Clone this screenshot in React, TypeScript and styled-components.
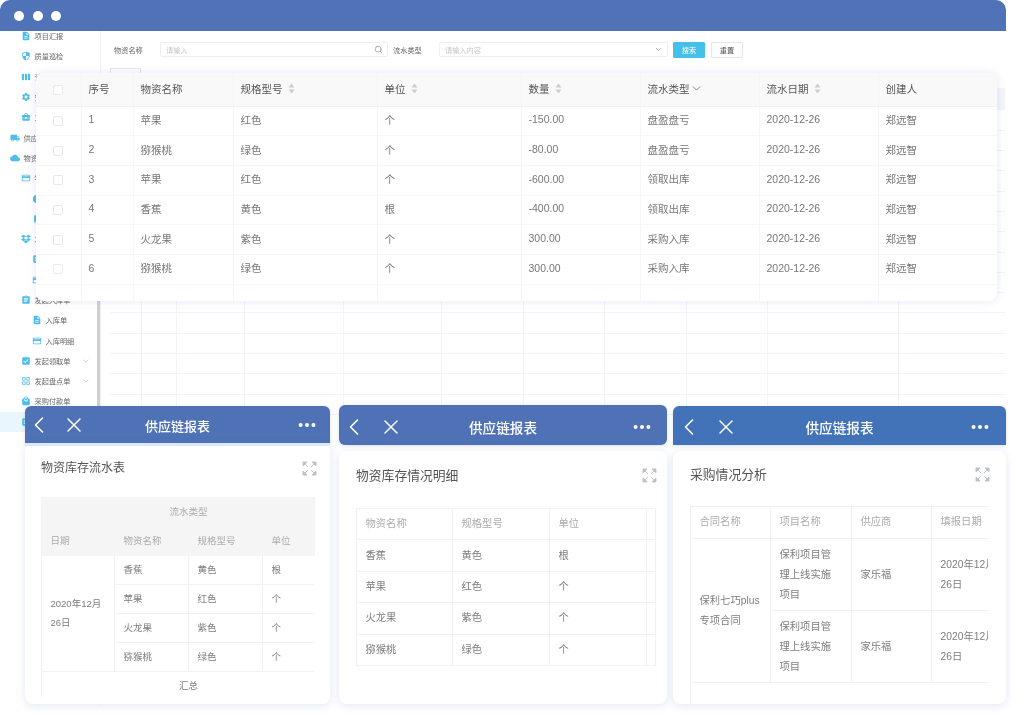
import React from 'react';
import styled, { createGlobalStyle } from 'styled-components';
import { ChevronDown, ChevronLeft, Ellipsis, Search, X } from 'lucide-react';
import { FaDropbox } from 'react-icons/fa';
import {
	MdAssignment,
	MdAssignmentTurnedIn,
	MdBookmark,
	MdBusinessCenter,
	MdCloud,
	MdCreditCard,
	MdDescription,
	MdGridView,
	MdLocalMall,
	MdLocalShipping,
	MdPieChart,
	MdSecurity,
	MdSettings,
	MdViewWeek,
} from 'react-icons/md';

const FONT = '"Liberation Sans", "Noto Sans CJK SC", sans-serif';

const GlobalStyle = createGlobalStyle`
	html, body {
		margin: 0;
		padding: 0;
		background: #fff;
		font-family: ${FONT};
	}
	* { box-sizing: border-box; }
`;

const Page = styled.div`
	position: relative;
	width: 1022px;
	height: 720px;
	overflow: hidden;
	background: #fff;
	filter: blur(0.45px);
`;

/* ---------- back window ---------- */

const Window = styled.div`
	display: flex;
	flex-direction: column;
	width: 1006px;
	height: 705px;
	border-radius: 10px 10px 0 0;
	overflow: hidden;
	background: #fff;
`;

const TitleBar = styled.div`
	display: flex;
	flex: none;
	align-items: center;
	gap: 8.5px;
	height: 31px;
	padding-left: 14px;
	background: #4f73b6;
`;

const Dot = styled.span`
	width: 10px;
	height: 10px;
	border-radius: 50%;
	background: #fff;
`;

const WindowBody = styled.div`
	display: flex;
	flex: 1;
	min-height: 0;
`;

const Sidebar = styled.div`
	position: relative;
	flex: none;
	width: 101px;
	overflow: hidden;
	border-right: 1px solid #f1f3f8;
`;

const SideList = styled.div`
	margin-top: -5px;
`;

const ScrollThumb = styled.div`
	position: absolute;
	top: 130px;
	right: 0;
	width: 3px;
	height: 255px;
	background: #cfcfcf;
`;

const SideRow = styled.div<{ $level: number; $active?: boolean }>`
	display: flex;
	align-items: center;
	gap: 3.5px;
	height: 20.3px;
	padding-left: ${({ $level }) => 10 + ($level - 1) * 11}px;
	font-size: 7.2px;
	color: #666;
	white-space: nowrap;
	background: ${({ $active }) => ($active ? '#e9f6fd' : 'transparent')};

	svg.side-icon {
		flex: none;
		color: #4fbde9;
	}
`;

const SideCaret = styled(ChevronDown)`
	position: absolute;
	right: 10px;
	color: #b9b9b9;
`;

const Main = styled.div`
	display: flex;
	flex: 1;
	flex-direction: column;
	min-width: 0;
	padding: 11px 0 0 9px;
`;

const FilterRow = styled.div`
	display: flex;
	align-items: center;
	height: 15px;
	padding-left: 4px;
	font-size: 7.2px;
	color: #666;
`;

const FilterLabel = styled.span`
	flex: none;
	width: 46px;
`;

const FilterInput = styled.div<{ $width: number }>`
	display: flex;
	flex: none;
	align-items: center;
	justify-content: space-between;
	width: ${({ $width }) => $width}px;
	height: 15px;
	margin-right: 5px;
	padding: 0 4px 0 5px;
	border: 1px solid #efefef;
	border-radius: 2px;
	color: #c6c6c6;

	svg {
		color: #999;
	}
`;

const FilterButton = styled.div<{ $primary?: boolean }>`
	display: flex;
	flex: none;
	align-items: center;
	justify-content: center;
	width: 32px;
	height: 16px;
	margin-right: 6px;
	border: 1px solid ${({ $primary }) => ($primary ? '#45c0e8' : '#e6e6e6')};
	border-radius: 1px;
	background: ${({ $primary }) => ($primary ? '#45c0e8' : '#fff')};
	color: ${({ $primary }) => ($primary ? '#fff' : '#555')};
`;

const TabButton = styled.div`
	display: flex;
	flex: none;
	align-items: center;
	justify-content: center;
	width: 31px;
	height: 20px;
	margin-top: 11px;
	border: 1px solid #e6e6e6;
	font-size: 7.2px;
	color: #555;
`;

const BackGrid = styled.table`
	flex: none;
	width: 895px;
	border-collapse: collapse;
	table-layout: fixed;

	th {
		height: 22px;
		padding: 0;
		background: #f3f5fb;
	}

	td {
		height: 20.3px;
		padding: 0;
		border: 1px solid #f2f3f9;
		border-top: 0;
	}
	td:first-child { border-left: 0; }
	td:last-child { border-right: 0; }
`;

/* ---------- main table card ---------- */

const TableCard = styled.div`
	position: absolute;
	top: 73px;
	left: 36px;
	width: 961px;
	height: 228px;
	overflow: hidden;
	border-radius: 8px;
	background: #fff;
	box-shadow: 0 0 10px rgba(84, 112, 190, 0.16);
`;

const DataTable = styled.table`
	width: 961px;
	border-collapse: collapse;
	table-layout: fixed;
	font-size: 10.5px;
	color: #777;

	th {
		height: 33px;
		padding: 0 0 2px 7px;
		background: #f9f9f9;
		border-right: 1px solid #f5f5f7;
		border-bottom: 1px solid #f0f1f4;
		font-weight: 400;
		text-align: left;
		color: #555;
	}

	td {
		height: 29.7px;
		padding: 0 0 3px 7px;
		border-right: 1px solid #f5f6f9;
		border-bottom: 1px solid #f5f6f9;
	}

	tr:last-child td {
		height: 17px;
		border-bottom: 0;
	}

	th:last-child, td:last-child { border-right: 0; }
`;

const HeadCell = styled.span<{ $gap?: number }>`
	display: inline-flex;
	align-items: center;
	gap: ${({ $gap }) => $gap ?? 5}px;
`;

const CheckBox = styled.span`
	display: block;
	width: 10px;
	height: 10px;
	margin: 3px 0 0 10px;
	border: 1px solid #e8e8e8;
	border-radius: 2px;
	background: #fff;
`;

const SortMark = () => (
	<svg width="7" height="11" viewBox="0 0 7 11">
		<path d="M3.5 0.5 L6.5 4.5 L0.5 4.5 Z M3.5 10.5 L6.5 6.5 L0.5 6.5 Z" fill="#cdcdcd" />
	</svg>
);

/* ---------- phone cards ---------- */

const PhoneRow = styled.div`
	position: absolute;
	top: 406px;
	left: 25px;
	display: flex;
	align-items: flex-start;
`;

const Phone = styled.div<{ $width: number; $left?: number; $raise?: number }>`
	display: flex;
	flex: none;
	flex-direction: column;
	width: ${({ $width }) => $width}px;
	margin-left: ${({ $left }) => $left || 0}px;
	margin-top: ${({ $raise }) => -($raise || 0)}px;
`;

const PhoneHeader = styled.div<{ $height: number; $color: string; $top: number; $square?: boolean }>`
	display: grid;
	flex: none;
	grid-template-columns: 1fr auto 1fr;
	align-items: center;
	height: ${({ $height }) => $height}px;
	padding-top: ${({ $top }) => $top}px;
	border-radius: ${({ $square }) => ($square ? '6px 6px 0 0' : '6px')};
	background: ${({ $color }) => $color};
	box-shadow: 0 1px 4px rgba(70, 100, 170, 0.18);
	color: #fff;
`;

const HeaderLeft = styled.div<{ $pad: number; $gap: number }>`
	display: flex;
	align-items: center;
	gap: ${({ $gap }) => $gap}px;
	padding-left: ${({ $pad }) => $pad}px;
`;

const HeaderRight = styled.div<{ $pad: number }>`
	display: flex;
	justify-content: flex-end;
	padding-right: ${({ $pad }) => $pad}px;
`;

const HeaderTitle = styled.span<{ $size: number }>`
	font-size: ${({ $size }) => $size}px;
	font-weight: 500;
`;

const PhoneBody = styled.div<{ $height: number; $gap: number; $left: number; $right: number; $accent?: boolean }>`
	flex: none;
	height: ${({ $height }) => $height}px;
	margin-top: ${({ $gap }) => $gap}px;
	padding: 0 ${({ $right }) => $right}px 0 ${({ $left }) => $left}px;
	overflow: hidden;
	border-top: ${({ $accent }) => ($accent ? '3px solid #d9e9f9' : '0')};
	border-radius: ${({ $accent }) => ($accent ? '0 0 8px 8px' : '8px')};
	background: #fff;
	box-shadow: 0 2px 10px rgba(84, 112, 190, 0.16);
`;

const BodyHead = styled.div<{ $size: number; $height: number; $below: number }>`
	display: flex;
	align-items: center;
	justify-content: space-between;
	height: ${({ $height }) => $height}px;
	margin-bottom: ${({ $below }) => $below}px;
	font-size: ${({ $size }) => $size}px;
	color: #555;

	svg {
		margin: 3px -2px 0 0;
	}
`;

const ClipBox = styled.div<{ $height?: number }>`
	height: ${({ $height }) => ($height ? `${$height}px` : 'auto')};
	overflow: hidden;
`;

const ReportTable = styled.table<{ $width: number; $size: number; $rowHeight: number; $padY?: number }>`
	width: ${({ $width }) => $width}px;
	border-collapse: collapse;
	table-layout: fixed;
	font-size: ${({ $size }) => $size}px;
	line-height: 1.95;
	color: #7d7d7d;

	th, td {
		height: ${({ $rowHeight }) => $rowHeight}px;
		padding: 0 0 0 8.5px;
		border: 1px solid #f0f1f4;
		font-weight: 400;
		text-align: left;
		white-space: nowrap;
		overflow: hidden;
	}

	td {
		padding-top: ${({ $padY }) => $padY || 0}px;
		padding-bottom: ${({ $padY }) => $padY || 0}px;
	}

	th {
		color: #acacac;
	}
`;

const ShadedRow = styled.tr`
	th {
		background: #f5f5f5;
		border-color: #f5f5f5;
	}
`;

const CenterCell = styled.td`
	&& {
		padding-left: 20px;
		text-align: center;
	}
`;

const CenterHead = styled.th`
	&& {
		padding-left: 0;
		text-align: center;
	}
`;

const ExpandMark = () => (
	<svg width="15" height="15" viewBox="0 0 15 15" fill="#bcc1c7" stroke="#bcc1c7" strokeWidth="0.9">
		<path d="M1 1H5L1 5Z M2 2L6 6" />
		<path d="M14 1H10L14 5Z M13 2L9 6" />
		<path d="M1 14H5L1 10Z M2 13L6 9" />
		<path d="M14 14H10L14 10Z M13 13L9 9" />
	</svg>
);

const sideItems: { label: string; level: number; icon: React.ElementType; caret?: boolean; active?: boolean }[] = [
	{ label: '项目汇报', level: 2, icon: MdDescription },
	{ label: '质量巡检', level: 2, icon: MdSecurity },
	{ label: '计划管理', level: 2, icon: MdViewWeek },
	{ label: '安全管理', level: 2, icon: MdSettings },
	{ label: '工程管理', level: 2, icon: MdBusinessCenter },
	{ label: '供应链管理', level: 1, icon: MdLocalShipping },
	{ label: '物资管理', level: 1, icon: MdCloud },
	{ label: '物资档案', level: 2, icon: MdCreditCard },
	{ label: '物资信息', level: 3, icon: MdPieChart },
	{ label: '供应商库', level: 3, icon: MdBookmark },
	{ label: '发起采购', level: 2, icon: FaDropbox },
	{ label: '采购订单', level: 3, icon: MdAssignment },
	{ label: '采购明细', level: 3, icon: MdCreditCard },
	{ label: '发起入库单', level: 2, icon: MdAssignment },
	{ label: '入库单', level: 3, icon: MdDescription },
	{ label: '入库明细', level: 3, icon: MdCreditCard },
	{ label: '发起领取单', level: 2, icon: MdAssignmentTurnedIn, caret: true },
	{ label: '发起盘点单', level: 2, icon: MdGridView, caret: true },
	{ label: '采购付款单', level: 2, icon: MdLocalMall },
	{ label: '物资流水', level: 2, icon: MdAssignment, active: true },
];

const backColumns = [31, 35, 68, 99, 98, 82, 81, 82, 81, 131, 107];
const mainColumns = [45, 52, 100, 144, 144, 119, 119, 119, 119];

const mainRows = [
	['1', '苹果', '红色', '个', '-150.00', '盘盈盘亏'],
	['2', '猕猴桃', '绿色', '个', '-80.00', '盘盈盘亏'],
	['3', '苹果', '红色', '个', '-600.00', '领取出库'],
	['4', '香蕉', '黄色', '根', '-400.00', '领取出库'],
	['5', '火龙果', '紫色', '个', '300.00', '采购入库'],
	['6', '猕猴桃', '绿色', '个', '300.00', '采购入库'],
];

const fruitRows = [
	['香蕉', '黄色', '根'],
	['苹果', '红色', '个'],
	['火龙果', '紫色', '个'],
	['猕猴桃', '绿色', '个'],
];

type PhoneTopProps = {
	height: number;
	color: string;
	size: number;
	top: number;
	leftPad: number;
	gap: number;
	rightPad: number;
	square?: boolean;
};

const PhoneTop = ({ height, color, size, top, leftPad, gap, rightPad, square }: PhoneTopProps) => (
	<PhoneHeader $height={height} $color={color} $top={top} $square={square}>
		<HeaderLeft $pad={leftPad} $gap={gap}>
			<ChevronLeft size={28} strokeWidth={1.4} />
			<X size={24} strokeWidth={1.5} />
		</HeaderLeft>
		<HeaderTitle $size={size}>供应链报表</HeaderTitle>
		<HeaderRight $pad={rightPad}>
			<Ellipsis size={22} strokeWidth={2.4} />
		</HeaderRight>
	</PhoneHeader>
);

const App = (): JSX.Element => {
	return (
		<Page>
			<GlobalStyle />
			<Window>
				<TitleBar>
					<Dot />
					<Dot />
					<Dot />
				</TitleBar>
				<WindowBody>
					<Sidebar>
						<SideList>
							{sideItems.map(({ label, level, icon: Icon, caret, active }) => (
								<SideRow key={label} $level={level} $active={active}>
									<Icon className="side-icon" size={10} />
									{label}
									{caret && <SideCaret size={8} />}
								</SideRow>
							))}
						</SideList>
						<ScrollThumb />
					</Sidebar>
					<Main>
						<FilterRow>
							<FilterLabel>物资名称</FilterLabel>
							<FilterInput $width={228}>
								请输入
								<Search size={9} />
							</FilterInput>
							<FilterLabel>流水类型</FilterLabel>
							<FilterInput $width={229}>
								请输入内容
								<ChevronDown size={9} />
							</FilterInput>
							<FilterButton $primary>搜索</FilterButton>
							<FilterButton>重置</FilterButton>
						</FilterRow>
						<TabButton>导出</TabButton>
						<BackGrid>
							<colgroup>
								{backColumns.map((w, i) => (
									<col key={i} width={w} />
								))}
							</colgroup>
							<thead>
								<tr>
									{backColumns.map((_, i) => (
										<th key={i} />
									))}
								</tr>
							</thead>
							<tbody>
								{Array.from({ length: 15 }).map((_, r) => (
									<tr key={r}>
										{backColumns.map((_w, c) => (
											<td key={c} />
										))}
									</tr>
								))}
							</tbody>
						</BackGrid>
					</Main>
				</WindowBody>
			</Window>

			<TableCard>
				<DataTable>
					<colgroup>
						{mainColumns.map((w, i) => (
							<col key={i} width={w} />
						))}
					</colgroup>
					<thead>
						<tr>
							<th><CheckBox /></th>
							<th>序号</th>
							<th>物资名称</th>
							<th><HeadCell>规格型号<SortMark /></HeadCell></th>
							<th><HeadCell>单位<SortMark /></HeadCell></th>
							<th><HeadCell>数量<SortMark /></HeadCell></th>
							<th><HeadCell $gap={0}>流水类型<ChevronDown size={13} strokeWidth={1.3} /></HeadCell></th>
							<th><HeadCell>流水日期<SortMark /></HeadCell></th>
							<th>创建人</th>
						</tr>
					</thead>
					<tbody>
						{mainRows.map((row) => (
							<tr key={row[0]}>
								<td><CheckBox /></td>
								{row.map((cell, i) => (
									<td key={i}>{cell}</td>
								))}
								<td>2020-12-26</td>
								<td>郑远智</td>
							</tr>
						))}
						<tr>
							{mainColumns.map((_, i) => (
								<td key={i} />
							))}
						</tr>
					</tbody>
				</DataTable>
			</TableCard>

			<PhoneRow>
				<Phone $width={305}>
					<PhoneTop height={37} color="#4e72b5" size={13} top={1} leftPad={0} gap={8.5} rightPad={12} square />
					<PhoneBody $height={261} $gap={0} $left={16} $right={15} $accent>
						<BodyHead $size={12} $height={41} $below={10}>
							物资库存流水表
							<ExpandMark />
						</BodyHead>
						<ClipBox $height={200}>
							<ReportTable $width={274} $size={9.5} $rowHeight={29}>
								<colgroup>
									<col width={73} />
									<col width={74} />
									<col width={74} />
									<col width={53} />
								</colgroup>
								<thead>
									<ShadedRow>
										<th />
										<CenterHead colSpan={2}>流水类型</CenterHead>
										<th />
									</ShadedRow>
									<ShadedRow>
										<th>日期</th>
										<th>物资名称</th>
										<th>规格型号</th>
										<th>单位</th>
									</ShadedRow>
								</thead>
								<tbody>
									{fruitRows.map((row, i) => (
										<tr key={row[0]}>
											{i === 0 && <td rowSpan={4}>2020年12月<br />26日</td>}
											{row.map((cell) => (
												<td key={cell}>{cell}</td>
											))}
										</tr>
									))}
									<tr>
										<CenterCell colSpan={4}>汇总</CenterCell>
									</tr>
								</tbody>
							</ReportTable>
						</ClipBox>
					</PhoneBody>
				</Phone>

				<Phone $width={328} $left={9} $raise={1}>
					<PhoneTop height={40} color="#4e72b5" size={13.6} top={3} leftPad={1} gap={11} rightPad={14} />
					<PhoneBody $height={253} $gap={6} $left={17} $right={12}>
						<BodyHead $size={12.8} $height={46} $below={11}>
							物资库存情况明细
							<ExpandMark />
						</BodyHead>
						<ReportTable $width={299} $size={10.3} $rowHeight={31.4}>
							<colgroup>
								<col width={96} />
								<col width={97} />
								<col width={97} />
								<col width={9} />
							</colgroup>
							<thead>
								<tr>
									<th>物资名称</th>
									<th>规格型号</th>
									<th>单位</th>
									<th />
								</tr>
							</thead>
							<tbody>
								{fruitRows.map((row) => (
									<tr key={row[0]}>
										{row.map((cell) => (
											<td key={cell}>{cell}</td>
										))}
										<td />
									</tr>
								))}
							</tbody>
						</ReportTable>
					</PhoneBody>
				</Phone>

				<Phone $width={333} $left={6}>
					<PhoneTop height={39} color="#4272b8" size={13.6} top={2} leftPad={2} gap={11} rightPad={15} square />
					<PhoneBody $height={253} $gap={6} $left={17} $right={18}>
						<BodyHead $size={12.8} $height={44} $below={11}>
							采购情况分析
							<ExpandMark />
						</BodyHead>
						<ClipBox>
							<ReportTable $width={321} $size={10.3} $rowHeight={32} $padY={5.5}>
								<colgroup>
									<col width={80} />
									<col width={81} />
									<col width={80} />
									<col width={80} />
								</colgroup>
								<thead>
									<tr>
										<th>合同名称</th>
										<th>项目名称</th>
										<th>供应商</th>
										<th>填报日期</th>
									</tr>
								</thead>
								<tbody>
									<tr>
										<td rowSpan={2}>保利七巧plus<br />专项合同</td>
										<td>保利项目管<br />理上线实施<br />项目</td>
										<td>家乐福</td>
										<td>2020年12月<br />26日</td>
									</tr>
									<tr>
										<td>保利项目管<br />理上线实施<br />项目</td>
										<td>家乐福</td>
										<td>2020年12月<br />26日</td>
									</tr>
									<tr>
										<td colSpan={4} />
									</tr>
								</tbody>
							</ReportTable>
						</ClipBox>
					</PhoneBody>
				</Phone>
			</PhoneRow>
		</Page>
	);
};

export default App;
